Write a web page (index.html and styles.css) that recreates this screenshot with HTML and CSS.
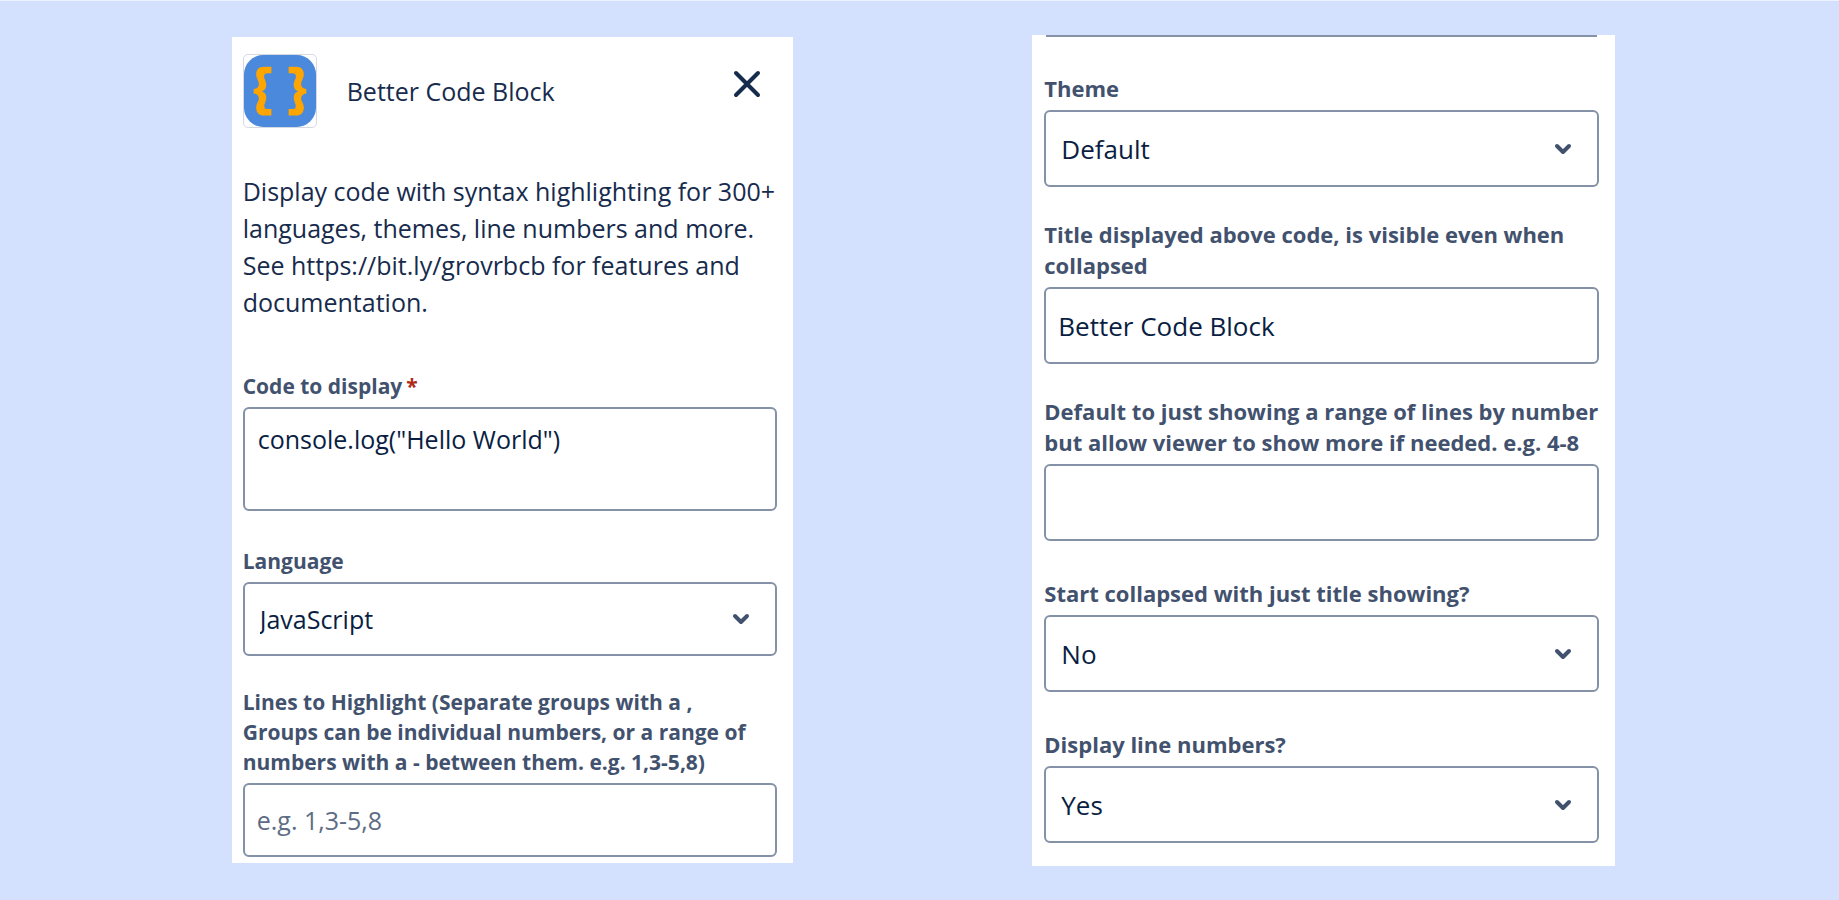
FILE: index.html
```html
<!DOCTYPE html>
<html lang="en">
<head>
<meta charset="utf-8">
<meta name="viewport" content="width=device-width, initial-scale=1">
<title>Better Code Block</title>
<link rel="stylesheet" href="styles.css">
</head>
<body>
<main class="stage">
  <form class="panel panel-main">
    <header class="header">
      <span class="logo">
        <svg viewBox="0 0 71 71" aria-hidden="true">
          <rect width="71" height="71" rx="19" fill="#4a89dc"/>
          <g fill="#ffa500">
            <path id="brace" d="M27 11.7H20C14 11.7 12 15 12 19.5C12 23 14.7 25.500 14.700 28.500C14.700 31.500 12.500 33 9.500 33.500V38C12.500 38.500 14.700 40 14.700 43C14.700 46 12 48 12 51.500C12 56.500 14 59.700 20 59.700H27V53.300H23.500C21 53.300 20 52.500 20 50.500C20 47.500 22 45.500 22 42C22 38.500 20.500 36.700 17.500 35.700C20.500 34.700 22 33 22 29.500C22 26 19.800 24 19.800 21C19.800 19 21 18.100 23.500 18.100H27Z"/>
            <use href="#brace" transform="translate(71 0) scale(-1 1)"/>
          </g>
        </svg>
      </span>
      <h1 class="title">Better Code Block</h1>
      <button class="close" type="button" aria-label="Close">
        <svg viewBox="0 0 28 28" aria-hidden="true"><path d="M3 3L25 25M25 3L3 25"/></svg>
      </button>
    </header>
    <p class="intro">Display code with syntax highlighting for 300+ languages, themes, line numbers and more. See https://bit.ly/grovrbcb for features and documentation.</p>
    <div class="field field-spaced">
      <label for="code">Code to display<span class="required">*</span></label>
      <textarea class="control control-area" id="code" required>console.log("Hello World")</textarea>
    </div>
    <div class="field">
      <label for="language">Language</label>
      <div class="picker">
        <select class="control" id="language"><option>JavaScript</option></select>
        <svg class="chevron" viewBox="0 0 18 12" aria-hidden="true"><path d="M3 3L9 9L15 3"/></svg>
      </div>
    </div>
    <div class="field">
      <label for="lines">Lines to Highlight (Separate groups with a ,<br>Groups can be individual numbers, or a range of numbers with a - between them. e.g. 1,3-5,8)</label>
      <input class="control" id="lines" type="text" placeholder="e.g. 1,3-5,8">
    </div>
  </form>

  <form class="panel panel-more">
    <div class="cut-edge"></div>
    <div class="field">
      <label for="theme">Theme</label>
      <div class="picker">
        <select class="control" id="theme"><option>Default</option></select>
        <svg class="chevron" viewBox="0 0 18 12" aria-hidden="true"><path d="M3 3L9 9L15 3"/></svg>
      </div>
    </div>
    <div class="field">
      <label for="block-title">Title displayed above code, is visible even when collapsed</label>
      <input class="control" id="block-title" type="text" value="Better Code Block">
    </div>
    <div class="field field-spaced">
      <label for="range">Default to just showing a range of lines by number but allow viewer to show more if needed. e.g. 4-8</label>
      <input class="control" id="range" type="text">
    </div>
    <div class="field field-spaced">
      <label for="collapsed">Start collapsed with just title showing?</label>
      <div class="picker">
        <select class="control" id="collapsed"><option>No</option></select>
        <svg class="chevron" viewBox="0 0 18 12" aria-hidden="true"><path d="M3 3L9 9L15 3"/></svg>
      </div>
    </div>
    <div class="field">
      <label for="numbers">Display line numbers?</label>
      <div class="picker">
        <select class="control" id="numbers"><option>Yes</option></select>
        <svg class="chevron" viewBox="0 0 18 12" aria-hidden="true"><path d="M3 3L9 9L15 3"/></svg>
      </div>
    </div>
  </form>
</main>
</body>
</html>
```

FILE: styles.css
```css
* {
  box-sizing: border-box;
}

body {
  margin: 0;
  background: #d3e0fe;
  color: #172b4d;
  font-family: "Segoe UI", "Open Sans", "Noto Sans", sans-serif;
}

.stage {
  display: grid;
  grid-template-columns: 562fr 583fr;
  column-gap: 17.3%;
  align-items: start;
  min-height: 100vh;
  padding: 34px 12.2% 34px 12.6%;
  border-top: 1px solid #ecf2ff;
}

.panel {
  display: flex;
  flex-direction: column;
  background: #fff;
}

.panel-main {
  margin-top: 2px;
  padding: 17px 16px 6px 11px;
  font-size: 25px;
}

.panel-more {
  padding: 0 16px 23px 12px;
  font-size: 26px;
}

.header {
  display: flex;
  align-items: center;
}

.logo {
  width: 74px;
  height: 74px;
  border: 1px solid #d5dae3;
  border-radius: 5px;
}

.logo svg {
  display: block;
}

.title {
  flex: 1;
  margin: 0 0 0 30px;
  font-size: 25px;
  font-weight: 400;
  line-height: 37px;
}

.close {
  align-self: flex-start;
  margin: 12px 12px 0 0;
  padding: 4px;
  border: 0;
  background: none;
}

.close svg {
  display: block;
  width: 28px;
  height: 28px;
  fill: none;
  stroke: #172b4d;
  stroke-width: 4;
  stroke-linecap: round;
}

.intro {
  margin: 45px 0 50px;
  line-height: 37px;
}

.field {
  display: flex;
  flex-direction: column;
  gap: 6px;
  margin-bottom: 32px;
}

.field-spaced {
  margin-bottom: 37px;
}

.panel-main .field {
  margin-bottom: 31px;
}

.panel-main .field-spaced {
  margin-bottom: 35px;
}

.panel .field:last-child {
  margin-bottom: 0;
}

.field label {
  color: #42526e;
  font-size: 22px;
  font-weight: 700;
  line-height: 31px;
}

.panel-main label {
  font-size: 21px;
  line-height: 30px;
}

.required {
  margin-left: 4px;
  color: #ae2a19;
}

.control {
  display: block;
  width: 100%;
  height: 77px;
  margin: 0;
  padding: 0 12px;
  border: 2px solid #8491a7;
  border-radius: 6px;
  background: #fff;
  color: #091e42;
  font: inherit;
  appearance: none;
}

select.control {
  padding: 0 15px;
}

.control::placeholder {
  color: #5e6c84;
  opacity: 1;
}

.panel-main .control {
  height: 74px;
}

.panel-main .control-area {
  height: 104px;
  padding: 12px 13px;
  line-height: 37px;
  resize: none;
}

.picker {
  position: relative;
}

.chevron {
  position: absolute;
  top: 50%;
  right: 27px;
  width: 18px;
  height: 12px;
  margin-top: -6px;
  fill: none;
  stroke: #42526e;
  stroke-width: 4;
  stroke-linecap: round;
  stroke-linejoin: round;
  pointer-events: none;
}

.cut-edge {
  height: 2px;
  margin: 0 2px 36px;
  background: #8491a7;
}
```
